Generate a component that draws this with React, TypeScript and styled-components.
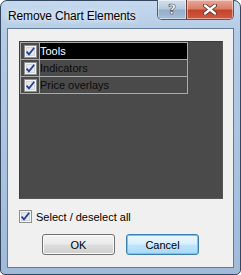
import * as React from 'react'
import styled, { createGlobalStyle } from 'styled-components'

const GlobalStyle = createGlobalStyle`
  html, body {
    margin: 0;
    padding: 0;
    background: #ffffff;
    overflow: hidden;
  }
`

const Window = styled.div`
  box-sizing: border-box;
  width: 241px;
  height: 275px;
  display: flex;
  flex-direction: column;
  padding: 0 6px 6px 6px;
  border: 1px solid #34475e;
  border-radius: 7px 7px 5px 5px;
  background: linear-gradient(180deg, #c4d9ee 0%, #b3cbe4 12%, #a9c3df 60%, #9fbbd9 100%);
  font-family: 'Liberation Sans', Arial, sans-serif;
`
const TitleBar = styled.div`
  height: 27px;
  display: flex;
  align-items: flex-start;
  justify-content: space-between;
`
const Title = styled.div`
  padding: 8px 0 0 1px;
  font-size: 12px;
  color: #000000;
  letter-spacing: -0.15px;
  text-shadow: 0 0 5px rgba(255, 255, 255, 0.95), 0 0 9px rgba(255, 255, 255, 0.8);
`
const Controls = styled.div`
  display: flex;
  margin-top: -1px;
  height: 19px;
  border: 1px solid #4a5d74;
  border-top: 0;
  border-radius: 0 0 5px 5px;
  overflow: hidden;
`
const CaptionButton = styled.div<{ $close?: boolean }>`
  box-sizing: border-box;
  width: ${(p) => (p.$close ? '47px' : '28px')};
  height: 19px;
  display: flex;
  align-items: center;
  justify-content: center;
  border-left: ${(p) => (p.$close ? '1px solid #6b3a34' : '0')};
  box-shadow: inset 0 0 0 1px rgba(255, 255, 255, 0.45);
  background: ${(p) =>
    p.$close
      ? 'linear-gradient(180deg, #e9a898 0%, #d8806a 45%, #c4432b 55%, #cf5a3f 100%)'
      : 'linear-gradient(180deg, #d3e1ee 0%, #b5cade 45%, #94aecb 55%, #a6bfd9 100%)'};
`
const HelpGlyph = styled.span`
  font-family: 'DejaVu Sans', sans-serif;
  font-weight: bold;
  font-size: 14px;
  line-height: 1;
  color: #ffffff;
  -webkit-text-stroke: 0.6px #3c4d63;
  margin-top: -1px;
`
const Client = styled.div`
  flex: 1;
  display: flex;
  flex-direction: column;
  padding: 12px 0 0 11px;
  border: 1px solid #62799a;
  background: #f0f0f0;
`
const Panel = styled.div`
  box-sizing: border-box;
  width: 204px;
  height: 158px;
  background: #4a4a4a;
  border: 1px solid #3b3b3b;
  border-right-color: #565656;
  border-bottom-color: #565656;
`
const List = styled.div`
  display: inline-grid;
  grid-template-columns: 19px 148px;
  border-top: 1px solid #aaaaaa;
  border-left: 1px solid #aaaaaa;
`
const Cell = styled.div<{ $selected?: boolean }>`
  height: 16px;
  display: flex;
  align-items: center;
  border-right: 1px solid #aaaaaa;
  border-bottom: 1px solid #aaaaaa;
  background: ${(p) => (p.$selected ? '#000000' : 'transparent')};
  color: ${(p) => (p.$selected ? '#ffffff' : '#0a0a0a')};
  font-size: 11px;
  white-space: nowrap;
`
const CheckCell = styled(Cell)`
  padding-left: 3px;
`
const SelectAll = styled.label`
  display: flex;
  align-items: center;
  gap: 4px;
  margin-top: 11px;
  height: 13px;
  font-size: 11px;
  color: #000000;
`
const Buttons = styled.div`
  display: flex;
  gap: 11px;
  margin: 11px 0 0 23px;
`
const Button = styled.div<{ $focused?: boolean }>`
  box-sizing: border-box;
  width: 73px;
  height: 21px;
  display: flex;
  align-items: center;
  justify-content: center;
  border: 1px solid ${(p) => (p.$focused ? '#3c7fb1' : '#707070')};
  border-radius: 3px;
  font-size: 11px;
  color: #000000;
  box-shadow: inset 0 0 0 1px ${(p) => (p.$focused ? '#48d8fb' : '#fbfbfb')};
  background: ${(p) =>
    p.$focused
      ? 'linear-gradient(180deg, #eaf6fd 0%, #d9f0fc 48%, #bee6fd 52%, #a7d9f5 100%)'
      : 'linear-gradient(180deg, #f2f2f2 0%, #ebebeb 48%, #dddddd 52%, #cfcfcf 100%)'};
`

const CheckBox = () => (
  <svg width="13" height="13" viewBox="0 0 13 13">
    <rect x="0.5" y="0.5" width="12" height="12" fill="#f4f4f4" stroke="#8e8f8f" />
    <rect x="2" y="2" width="9" height="9" fill="#d2d4d8" />
    <rect x="3" y="3" width="7" height="7" fill="#e6e8ec" />
    <path d="M2.6 6.6 L5 9.4 L10.2 2.8" fill="none" stroke="#1e3f98" strokeWidth="1.7" />
  </svg>
)

const CloseGlyph = () => (
  <svg width="14" height="11" viewBox="0 0 14 11">
    <path d="M2 1.5 L12 9.5 M12 1.5 L2 9.5" stroke="#5a2a22" strokeWidth="4" strokeLinecap="round" />
    <path d="M2 1.5 L12 9.5 M12 1.5 L2 9.5" stroke="#ffffff" strokeWidth="2.4" strokeLinecap="round" />
  </svg>
)

const items = [
  { name: 'Tools', selected: true },
  { name: 'Indicators', selected: false },
  { name: 'Price overlays', selected: false },
]

export default function App() {
  return (
    <>
      <GlobalStyle />
      <Window>
        <TitleBar>
          <Title>Remove Chart Elements</Title>
          <Controls>
            <CaptionButton>
              <HelpGlyph>?</HelpGlyph>
            </CaptionButton>
            <CaptionButton $close>
              <CloseGlyph />
            </CaptionButton>
          </Controls>
        </TitleBar>
        <Client>
          <Panel>
            <List>
              {items.map((item) => (
                <React.Fragment key={item.name}>
                  <CheckCell>
                    <CheckBox />
                  </CheckCell>
                  <Cell $selected={item.selected}>{item.name}</Cell>
                </React.Fragment>
              ))}
            </List>
          </Panel>
          <SelectAll>
            <CheckBox />
            Select / deselect all
          </SelectAll>
          <Buttons>
            <Button>OK</Button>
            <Button $focused>Cancel</Button>
          </Buttons>
        </Client>
      </Window>
    </>
  )
}
